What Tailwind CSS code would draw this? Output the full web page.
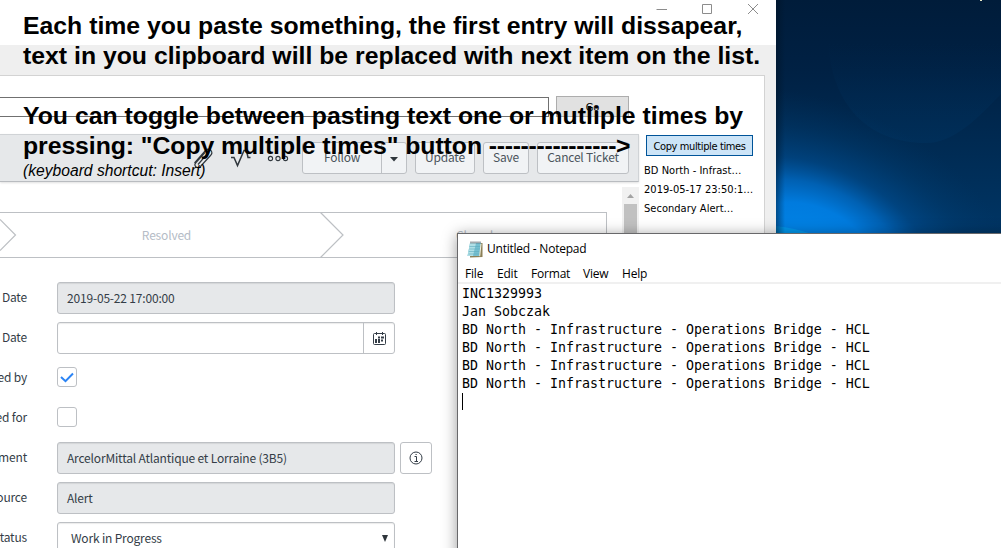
<!DOCTYPE html>
<html lang="en">
<head>
<meta charset="utf-8">
<title>Clipboard helper</title>
<script src="https://cdn.jsdelivr.net/npm/@tailwindcss/browser@4"></script>
</head>
<body class="relative w-[1001px] h-[548px] overflow-hidden bg-[#001f3f]">

<!-- Desktop wallpaper -->
<svg class="absolute left-[776px] top-0" width="225" height="240" viewBox="0 0 225 240">
  <defs>
    <linearGradient id="sky" x1="0" y1="0" x2="0" y2="1">
      <stop offset="0" stop-color="#001c3a"/><stop offset=".3" stop-color="#002144"/><stop offset=".65" stop-color="#002c55"/><stop offset="1" stop-color="#003666"/>
    </linearGradient>
    <radialGradient id="glow" gradientUnits="userSpaceOnUse" cx="0" cy="0" r="1" gradientTransform="translate(34 252) rotate(24) scale(225 150)">
      <stop offset="0" stop-color="#0086e8"/><stop offset=".3" stop-color="#007bde"/><stop offset=".44" stop-color="#0069c2" stop-opacity=".85"/><stop offset=".58" stop-color="#00529a" stop-opacity=".55"/><stop offset=".78" stop-color="#00447e" stop-opacity=".28"/><stop offset="1" stop-color="#003a6c" stop-opacity="0"/>
    </radialGradient>
    <linearGradient id="arc" x1="0" y1="0" x2="0" y2="1"><stop offset=".3" stop-color="#003461" stop-opacity="0"/><stop offset="1" stop-color="#003665" stop-opacity=".35"/></linearGradient>
    <linearGradient id="edge" x1="0" y1="0" x2="1" y2="0"><stop offset="0" stop-color="#001020" stop-opacity=".45"/><stop offset="1" stop-color="#001020" stop-opacity="0"/></linearGradient>
  </defs>
  <rect width="225" height="240" fill="url(#sky)"/>
  <path d="M52 40C55 105 92 143 150 143C178 143 202 118 225 94V0H60Z" fill="url(#arc)"/>
  <rect width="225" height="240" fill="url(#glow)"/>
  <path d="M0 226Q18 228 36 234H0Z" fill="#009cec" opacity=".75"/>
  <rect width="9" height="240" fill="url(#edge)"/>
  <rect x="204" width="2" height="1" fill="#e8e8c8"/>
</svg>

<!-- Main application window -->
<div class="absolute left-0 top-0 w-[776px] h-[548px] bg-[#efefef] flex flex-col">
  <div class="h-[45px] shrink-0 bg-white flex justify-end pr-[17px] pt-[3px]">
    <svg width="104" height="12" viewBox="0 0 104 12" fill="none" stroke="#8c8c8c"><path d="M1.500 6.500H12M47.500 1.500H56.500V10.500H47.500Z"/><path d="M93 1L103 11M103 1L93 11"/></svg>
  </div>
  <div class="mt-[30px] h-[473px] w-[765px] bg-white border-t border-r border-[#d3d3d3] flex">
    <div class="w-[639px] shrink-0 flex flex-col">
      <div class="h-[58px] pt-[20px] flex gap-[7px] shrink-0">
        <div class="w-[549px] mt-px h-[20px] border border-l-0 border-[#707070]"></div>
        <div class="w-[73px] h-[21px] bg-[#e1e1e1] border border-[#adadad] text-center text-black text-[11px] leading-[21px] font-['DejaVu_Sans_Condensed','DejaVu_Sans',sans-serif]">Go</div>
      </div>
      <div class="h-[48px] shrink-0 bg-[#e6e8ea] border border-l-0 border-[#d0d3d6] border-b-[#b9bcc0] flex items-start pt-[7px] text-[#4b545c] text-[12px] tracking-[-0.200px] leading-[28px] font-['Noto_Sans_CJK_JP',sans-serif] shadow-[0_1px_2px_rgba(0,0,0,0.12)]">
        <svg class="ml-[190px] shrink-0" width="112" height="32" viewBox="0 0 112 32" fill="none" stroke="#30373d">
          <path d="M4.500 21L15.500 8.500Q18.500 6 21 8.500Q23 11 20.500 13.500L10 25Q7.500 26.500 5.500 24.500Q4 22.500 6 20.500L15 10.500M8 22.500L18 11" stroke-width="1.200"/>
          <path d="M41 15.500H44L47.500 23.500L54 8.500H56.500L58 15.500H60.500" stroke-width="1.500"/>
          <circle cx="80.500" cy="16.500" r="2.100" stroke-width="1.100"/><circle cx="88" cy="16.500" r="2.100" stroke-width="1.100"/><circle cx="95.500" cy="16.500" r="2.100" stroke-width="1.100"/>
        </svg>
        <div class="w-[105px] h-[32px] rounded-[3px] border border-[#bdc0c4] bg-[#f1f3f5] flex mr-2">
          <div class="w-[79px] text-center border-r border-[#bdc0c4]">Follow</div>
          <div class="flex-1 flex justify-center pt-[14px]"><svg width="8" height="5" viewBox="0 0 8 5"><path d="M0 0H8L4 4.500Z" fill="#2f363c"/></svg></div>
        </div>
        <div class="w-[60px] h-[32px] rounded-[3px] border border-[#bdc0c4] bg-[#f1f3f5] text-center mr-2">Update</div>
        <div class="w-[46px] h-[32px] rounded-[3px] border border-[#bdc0c4] bg-[#f1f3f5] text-center mr-2">Save</div>
        <div class="w-[92px] h-[32px] rounded-[3px] border border-[#bdc0c4] bg-[#f1f3f5] text-center whitespace-nowrap">Cancel Ticket</div>
      </div>
      <div class="flex-1 flex text-[#343d47] text-[12px] tracking-[-0.180px] font-['Noto_Sans_CJK_JP',sans-serif]">
        <div class="w-[622px] pt-[30px]">
          <div class="relative h-[46px] w-[607px] border border-l-0 border-[#bdc0c4] text-[#b5bcc6] leading-[44px]">
            <svg class="absolute left-0 -top-px" width="350" height="46" viewBox="0 0 350 46" fill="none" stroke="#bdc0c4" stroke-width="1.200"><path d="M0 7.500L15.500 23L0 38.500M320.500 .5L343 23L320.500 45.500"/></svg>
            <span class="inline-block w-[333px] text-center">Resolved</span><span class="inline-block ml-[123px]">Closed</span>
          </div>
          <div class="pt-[24px] flex flex-col gap-2">
            <div class="h-[32px] flex leading-[30px]"><div class="w-[27px] mr-[30px] flex justify-end whitespace-nowrap">Date</div><div class="w-[338px] border border-[#bdc0c4] rounded-[3px] bg-[#e6e8ea] pl-[9px] leading-[30px] shadow-[inset_0_1px_1px_rgba(0,0,0,0.08)]">2019-05-22 17:00:00</div></div>
            <div class="h-[32px] flex leading-[30px]"><div class="w-[27px] mr-[30px] flex justify-end whitespace-nowrap">Date</div><div class="w-[338px] border border-[#bdc0c4] rounded-[3px] flex justify-end shadow-[inset_0_1px_1px_rgba(0,0,0,0.08)]"><div class="w-[31px] border-l border-[#bdc0c4] flex justify-center items-center">
              <svg width="13" height="13" viewBox="0 0 13 13" fill="none" stroke="#343d47"><rect x=".5" y="1.500" width="12" height="11" rx="1"/><path d="M3.500 0V3M9.500 0V3" /><path d="M2 7h2v4H2zM5 4.500h2v2H5zM5 7h2v4H5zM8 4.500h3v2H8zM8 7.500h2v2H8z" fill="#343d47" stroke="none"/></svg></div></div></div>
            <div class="h-[32px] flex leading-[30px]"><div class="w-[27px] mr-[30px] flex justify-end whitespace-nowrap">Resolved by</div><div class="w-[20px] h-[20px] mt-[5px] border border-[#bdc0c4] rounded-[3px] flex items-center justify-center"><svg width="14" height="11" viewBox="0 0 14 11" fill="none" stroke="#2b84f5" stroke-width="2"><path d="M1 5L5.500 9.200L13 1.500"/></svg></div></div>
            <div class="h-[32px] flex leading-[30px]"><div class="w-[27px] mr-[30px] flex justify-end whitespace-nowrap">Resolved for</div><div class="w-[20px] h-[20px] mt-[5px] border border-[#bdc0c4] rounded-[3px]"></div></div>
            <div class="h-[32px] flex leading-[30px]"><div class="w-[27px] mr-[30px] flex justify-end whitespace-nowrap">Department</div><div class="w-[338px] border border-[#bdc0c4] rounded-[3px] bg-[#e6e8ea] pl-[9px] leading-[30px] shadow-[inset_0_1px_1px_rgba(0,0,0,0.08)]">ArcelorMittal Atlantique et Lorraine (3B5)</div><div class="ml-[5px] w-[32px] border border-[#bdc0c4] rounded-[3px] flex items-center justify-center"><svg width="14" height="14" viewBox="0 0 14 14" fill="none" stroke="#343d47"><circle cx="7" cy="7" r="6"/><path d="M5.500 5.500H7.500V10M5.500 10.500H9M6.500 3.500H7.700"/></svg></div></div>
            <div class="h-[32px] flex leading-[30px]"><div class="w-[27px] mr-[30px] flex justify-end whitespace-nowrap">Source</div><div class="w-[338px] border border-[#bdc0c4] rounded-[3px] bg-[#e6e8ea] pl-[9px] leading-[29px] shadow-[inset_0_1px_1px_rgba(0,0,0,0.08)]">Alert</div></div>
            <div class="h-[32px] flex leading-[30px]"><div class="w-[27px] mr-[30px] flex justify-end whitespace-nowrap">Status</div><div class="w-[338px] border border-[#bdc0c4] rounded-[3px] pl-[13px] pr-[6px] leading-[30px] flex justify-between shadow-[inset_0_1px_1px_rgba(0,0,0,0.08)]">Work in Progress<svg class="mt-[12px]" width="6" height="7" viewBox="0 0 6 7"><path d="M0 0H6L3 7Z" fill="#2f363c"/></svg></div></div>
          </div>
        </div>
        <div class="mt-[5px] w-[17px] bg-[#f1f1f1] pt-[7px] px-[2px] flex flex-col items-center"><svg class="mb-[6px] shrink-0" width="7" height="4" viewBox="0 0 7 4"><path d="M0 4H7L3.500 0Z" fill="#a3a3a3"/></svg><div class="w-[13px] h-[200px] shrink-0 bg-[#c1c1c1]"></div></div>
      </div>
    </div>
    <div class="flex-1 pt-[59px] pl-[5px] text-black text-[11px] font-['DejaVu_Sans_Condensed','DejaVu_Sans',sans-serif] whitespace-nowrap">
      <div class="ml-[2px] w-[107px] h-[21px] border border-[#005499] bg-[#cce4f7] text-center leading-[21px] tracking-[-0.380px]">Copy multiple times</div>
      <div class="mt-[5px] leading-[19px] tracking-[0.030px]"><div>BD North - Infrast…</div><div>2019-05-17 23:50:1…</div><div>Secondary Alert…</div></div>
    </div>
  </div>
</div>

<!-- Annotation drawn over the application window -->
<div class="absolute left-[23px] top-[11px] text-black font-['Liberation_Sans',Arial,sans-serif] whitespace-nowrap">
  <div class="font-bold text-[24.800px] leading-[30px]">
    <div>Each time you paste something, the first entry will dissapear,</div>
    <div>text in you clipboard will be replaced with next item on the list.</div>
    <div class="h-[30px]"></div>
    <div>You can toggle between pasting text one or mutliple times by</div>
    <div class="tracking-[-0.070px]">pressing: "Copy multiple times" button <span class="tracking-[-0.300px]">----------------&gt;</span></div>
  </div>
  <div class="italic text-[15.650px] leading-[19px]">(keyboard shortcut: Insert)</div>
</div>

<!-- Notepad window -->
<div class="absolute left-[457px] top-[233px] w-[560px] h-[330px] bg-white border border-[#68686a] shadow-[0_2px_14px_rgba(0,0,0,0.4)] text-black font-['Open_Sans','Noto_Sans',sans-serif] whitespace-nowrap">
  <div class="h-[30px] flex items-center pl-[9px] text-[12px]">
    <svg width="16" height="17" viewBox="0 0 16 17"><path d="M3.500 3L15.500 2V16L3 16.500Z" fill="#8c8058"/><path d="M3 2H14L12.500 15H.5Z" fill="#75bfd0"/><path d="M3 2H9L6 15H.5Z" fill="#b0dfe6"/><path d="M2.500 5.500H13M2.200 8H13M1.800 10.500H12.500M1.400 13H12.500" stroke="#5eabbd" stroke-width=".6"/><path d="M14 3L12.700 15.200" stroke="#f3f1df"/><path d="M3.500 1.500H14" stroke="#47525a" stroke-width="2" stroke-dasharray="1 1"/></svg>
    <span class="ml-[4px] tracking-[-0.230px]">Untitled - Notepad</span>
  </div>
  <div class="h-[20px] border-b-2 border-[#f0f0f0] flex items-end leading-[17px] text-[12px] pl-[7px] tracking-[-0.200px]">
    <span class="w-[32px]">File</span><span class="w-[34px]">Edit</span><span class="w-[52px]">Format</span><span class="w-[39px]">View</span><span>Help</span>
  </div>
  <div class="pt-px pl-[4px] text-[13.290px] leading-[18px] font-['DejaVu_Sans_Mono',monospace]">
    <div>INC1329993</div>
    <div>Jan Sobczak</div>
    <div>BD North - Infrastructure - Operations Bridge - HCL</div>
    <div>BD North - Infrastructure - Operations Bridge - HCL</div>
    <div>BD North - Infrastructure - Operations Bridge - HCL</div>
    <div>BD North - Infrastructure - Operations Bridge - HCL</div>
    <div class="w-px h-[17px] bg-black"></div>
  </div>
</div>
</body>
</html>
